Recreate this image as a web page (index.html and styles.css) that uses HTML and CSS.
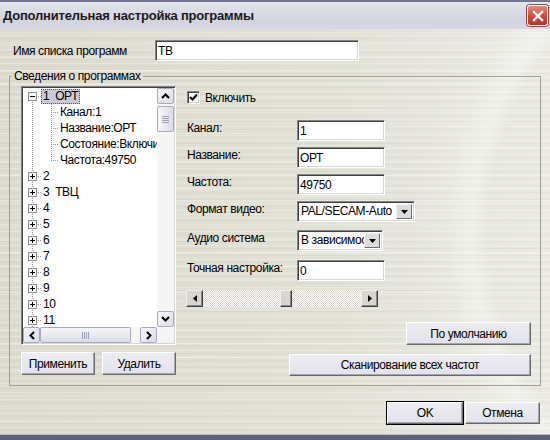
FILE: index.html
```html
<!DOCTYPE html>
<html lang="ru">
<head>
    <meta charset="UTF-8">
    <meta name="viewport" content="width=device-width, initial-scale=1.0">
    <title>Дополнительная настройка программы</title>
    <link rel="stylesheet" href="styles.css">
</head>
<body>

<div class="window">
    <div class="titlebar">
        <span class="title">Дополнительная настройка программы</span>
        <button class="close-btn" title="Закрыть">
            <svg width="12" height="12" viewBox="0 0 12 12"><path d="M2 2 L10 10 M10 2 L2 10" stroke="#fff" stroke-width="2.4" stroke-linecap="square"/></svg>
        </button>
    </div>

    <div class="name-row">
        <label class="name-label" for="listName">Имя списка программ</label>
        <input class="edit name-edit" id="listName" type="text" value="ТВ">
    </div>

    <fieldset class="group">
        <legend>Сведения о программах</legend>
        <div class="group-body">
            <div class="left-col">
                <div class="tree">
                    <ul class="tree-list">
                        <li class="node"><span class="tw root first"><span class="box minus"></span></span><span class="lbl selected">1&nbsp;&nbsp;ОРТ</span></li>
                        <li class="node"><span class="tw root-line"></span><span class="tw2 branch"></span><span class="lbl">Канал:1</span></li>
                        <li class="node"><span class="tw root-line"></span><span class="tw2 branch"></span><span class="lbl">Название:ОРТ</span></li>
                        <li class="node"><span class="tw root-line"></span><span class="tw2 branch"></span><span class="lbl">Состояние:Включить</span></li>
                        <li class="node"><span class="tw root-line"></span><span class="tw2 branch last"></span><span class="lbl">Частота:49750</span></li>
                        <li class="node"><span class="tw root"><span class="box plus"></span></span><span class="lbl">2</span></li>
                        <li class="node"><span class="tw root"><span class="box plus"></span></span><span class="lbl">3&nbsp;&nbsp;ТВЦ</span></li>
                        <li class="node"><span class="tw root"><span class="box plus"></span></span><span class="lbl">4</span></li>
                        <li class="node"><span class="tw root"><span class="box plus"></span></span><span class="lbl">5</span></li>
                        <li class="node"><span class="tw root"><span class="box plus"></span></span><span class="lbl">6</span></li>
                        <li class="node"><span class="tw root"><span class="box plus"></span></span><span class="lbl">7</span></li>
                        <li class="node"><span class="tw root"><span class="box plus"></span></span><span class="lbl">8</span></li>
                        <li class="node"><span class="tw root"><span class="box plus"></span></span><span class="lbl">9</span></li>
                        <li class="node"><span class="tw root"><span class="box plus"></span></span><span class="lbl">10</span></li>
                        <li class="node"><span class="tw root"><span class="box plus"></span></span><span class="lbl">11</span></li>
                        <li class="node"><span class="tw root"><span class="box plus"></span></span><span class="lbl">12</span></li>
                    </ul>
                    <div class="vscroll">
                        <span class="sb-btn"><svg width="9" height="6" viewBox="0 0 9 6"><path d="M1 5 L4.5 1.5 L8 5" fill="none" stroke="#000" stroke-width="2"/></svg></span>
                        <span class="sb-thumb v-thumb"></span>
                        <span class="sb-track"></span>
                        <span class="sb-btn"><svg width="9" height="6" viewBox="0 0 9 6"><path d="M1 1 L4.5 4.5 L8 1" fill="none" stroke="#000" stroke-width="2"/></svg></span>
                    </div>
                    <div class="hscroll">
                        <span class="sb-btn"><svg width="6" height="9" viewBox="0 0 6 9"><path d="M5 1 L1.5 4.5 L5 8" fill="none" stroke="#000" stroke-width="2"/></svg></span>
                        <span class="sb-thumb h-thumb"></span>
                        <span class="sb-track"></span>
                        <span class="sb-btn"><svg width="6" height="9" viewBox="0 0 6 9"><path d="M1 1 L4.5 4.5 L1 8" fill="none" stroke="#000" stroke-width="2"/></svg></span>
                    </div>
                    <div class="corner"></div>
                </div>
                <div class="tree-buttons">
                    <button class="btn">Применить</button>
                    <button class="btn">Удалить</button>
                </div>
            </div>

            <div class="right-col">
                <div class="check-row">
                    <span class="checkbox"><svg width="9" height="9" viewBox="0 0 9 9"><path d="M1 4 L3.5 6.5 L8 1.5" fill="none" stroke="#000" stroke-width="2"/></svg></span>
                    <span class="check-label">Включить</span>
                </div>

                <div class="field row-channel">
                    <span class="field-label">Канал:</span>
                    <input class="edit field-edit" type="text" value="1">
                </div>
                <div class="field row-name">
                    <span class="field-label">Название:</span>
                    <input class="edit field-edit" type="text" value="ОРТ">
                </div>
                <div class="field row-freq">
                    <span class="field-label">Частота:</span>
                    <input class="edit field-edit" type="text" value="49750">
                </div>
                <div class="field row-format">
                    <span class="field-label">Формат видео:</span>
                    <div class="combo format-combo">
                        <span class="combo-text">PAL/SECAM-Auto</span>
                        <span class="combo-btn"><svg width="7" height="4" viewBox="0 0 7 4"><path d="M0 0 H7 L3.5 4 Z" fill="#000"/></svg></span>
                    </div>
                </div>
                <div class="field row-audio">
                    <span class="field-label">Аудио система</span>
                    <div class="combo audio-combo">
                        <span class="combo-text">В зависимости от формата</span>
                        <span class="combo-btn"><svg width="7" height="4" viewBox="0 0 7 4"><path d="M0 0 H7 L3.5 4 Z" fill="#000"/></svg></span>
                    </div>
                </div>
                <div class="field row-fine">
                    <span class="field-label">Точная настройка:</span>
                    <input class="edit field-edit" type="text" value="0">
                </div>

                <div class="trackbar">
                    <span class="cl-btn"><svg width="4" height="7" viewBox="0 0 4 7"><path d="M4 0 V7 L0 3.5 Z" fill="#000"/></svg></span>
                    <span class="cl-track fine-left"></span>
                    <span class="cl-thumb"></span>
                    <span class="cl-track fine-right"></span>
                    <span class="cl-btn"><svg width="4" height="7" viewBox="0 0 4 7"><path d="M0 0 V7 L4 3.5 Z" fill="#000"/></svg></span>
                </div>

                <div class="action-row">
                    <button class="btn default-btn">По умолчанию</button>
                </div>
                <div class="action-row">
                    <button class="btn scan-btn">Сканирование всех частот</button>
                </div>
            </div>
        </div>
    </fieldset>

    <div class="dialog-buttons">
        <button class="btn ok-btn">OK</button>
        <button class="btn cancel-btn">Отмена</button>
    </div>

    <div class="frame-bottom"></div>
</div>

</body>
</html>
```

FILE: styles.css
```css
body {
    margin: 0;
    font-family: "Liberation Sans", Arial, sans-serif;
    font-size: 12px;
    letter-spacing: -0.4px;
    color: #000;
}
button, input {
    font-family: inherit;
    font-size: 12px;
    letter-spacing: inherit;
    color: #000;
}
.window {
    width: 550px;
    height: 440px;
    display: flex;
    flex-direction: column;
    overflow: hidden;
    background-color: #dedcd0;
    background-image:
        radial-gradient(circle at 790px 230px, transparent 300px, rgba(255, 255, 255, 0.35) 318px, rgba(255, 255, 255, 0.1) 345px, transparent 380px),
        repeating-linear-gradient(to bottom, rgba(255, 255, 255, 0.25) 0 1px, transparent 1px 3px, rgba(0, 0, 0, 0.03) 3px 4px, transparent 4px 7px),
        repeating-linear-gradient(to bottom, transparent 0 5px, rgba(255, 255, 255, 0.2) 5px 7px, transparent 7px 13px),
        linear-gradient(to right, #dddbcf 0%, #e2e1d6 60%, #ebeae2 100%);
}

/* caption */
.titlebar {
    height: 27px;
    flex: none;
    display: flex;
    align-items: center;
    padding-left: 3px;
    border-top: 2px solid #727690;
    background: linear-gradient(to bottom, #e4e4ec, #d3d3de 70%, #d8d8e2);
}
.title {
    font-weight: bold;
    font-size: 13px;
    letter-spacing: -0.2px;
    color: #1a1a1a;
}
.close-btn {
    margin-left: auto;
    margin-right: 2px;
    width: 21px;
    height: 21px;
    padding: 0;
    display: flex;
    align-items: center;
    justify-content: center;
    border: 1px solid #fff;
    border-radius: 3px;
    background: linear-gradient(to bottom, #e88a7e, #cc4a3c 55%, #b8372a);
    box-shadow: 0 0 0 1px #a04a40;
}

/* list name */
.name-row {
    display: flex;
    align-items: center;
    margin: 11px 0 0 13px;
    height: 21px;
}
.name-label {
    width: 142px;
}
.name-edit {
    width: 204px;
}

/* sunken edit boxes */
.edit {
    box-sizing: border-box;
    height: 21px;
    margin: 0;
    padding: 0 2px;
    background: #fff;
    border: 1px solid;
    border-color: #858585 #fff #fff #858585;
    box-shadow: inset 1px 1px 0 #404040, inset -1px -1px 0 #d6d6d6;
    outline: none;
}

/* group box */
.group {
    box-sizing: border-box;
    width: 532px;
    height: 317px;
    min-width: 0;
    margin: 8px 0 0 9px;
    padding: 3px 9px 0 2px;
    border: 1px solid #a09f98;
}
.group legend {
    padding: 0 2px;
    line-height: 14px;
}
.group-body {
    display: flex;
    gap: 11px;
    margin-left: 9px;
}
.left-col {
    width: 155px;
    flex: none;
}

/* tree view */
.tree {
    box-sizing: border-box;
    height: 259px;
    display: grid;
    grid-template-columns: 1fr 17px;
    grid-template-rows: 1fr 16px;
    background: #fff;
    border: 1px solid;
    border-color: #858585 #fff #fff #858585;
    box-shadow: inset 1px 1px 0 #404040, inset -1px -1px 0 #d6d6d6;
    padding: 1px;
}
.tree-list {
    list-style: none;
    margin: 0;
    padding: 0;
    overflow: hidden;
    min-width: 0;
}
.node {
    display: flex;
    align-items: center;
    height: 16px;
    white-space: nowrap;
}
.tw, .tw2 {
    flex: none;
    height: 16px;
    display: flex;
    align-items: center;
    background-repeat: no-repeat;
}
.tw {
    width: 18px;
}
.tw2 {
    width: 17px;
}
.root {
    background-image:
        repeating-linear-gradient(to bottom, #9a9a9a 0 1px, transparent 1px 2px),
        repeating-linear-gradient(to right, #9a9a9a 0 1px, transparent 1px 2px);
    background-size: 1px 16px, 9px 1px;
    background-position: 9px 0, 9px 8px;
}
.root.first {
    background-size: 1px 8px, 9px 1px;
    background-position: 9px 8px, 9px 8px;
}
.root-line {
    background-image: repeating-linear-gradient(to bottom, #9a9a9a 0 1px, transparent 1px 2px);
    background-size: 1px 16px;
    background-position: 9px 0;
}
.branch {
    background-image:
        repeating-linear-gradient(to bottom, #9a9a9a 0 1px, transparent 1px 2px),
        repeating-linear-gradient(to right, #9a9a9a 0 1px, transparent 1px 2px);
    background-size: 1px 16px, 7px 1px;
    background-position: 10px 0, 10px 8px;
}
.branch.last {
    background-size: 1px 9px, 7px 1px;
}
.box {
    box-sizing: border-box;
    width: 9px;
    height: 9px;
    margin-left: 5px;
    border: 1px solid #919191;
    background: #fff;
}
.box.minus {
    background: linear-gradient(#000, #000) center / 5px 1px no-repeat, #fff;
}
.box.plus {
    background:
        linear-gradient(#000, #000) center / 5px 1px no-repeat,
        linear-gradient(#000, #000) center / 1px 5px no-repeat,
        #fff;
}
.lbl {
    padding: 0 2px;
    line-height: 15px;
}
.lbl.selected {
    background: #c9cad8;
    outline: 1px dotted #555;
    outline-offset: -1px;
}

/* xp style scroll bars */
.vscroll, .hscroll {
    display: flex;
    background: #f5f5f3;
}
.vscroll {
    flex-direction: column;
}
.sb-btn, .sb-thumb {
    box-sizing: border-box;
    display: flex;
    align-items: center;
    justify-content: center;
    border: 1px solid #a9abbd;
    border-radius: 2px;
    background: linear-gradient(135deg, #f6f6fa, #dcdce8);
}
.vscroll .sb-btn {
    height: 16px;
}
.hscroll .sb-btn {
    width: 17px;
}
.sb-track {
    flex: 1;
}
.v-thumb {
    height: 26px;
    margin-top: 2px;
    background:
        repeating-linear-gradient(to bottom, #9fa1b4 0 1px, transparent 1px 2px) center / 7px 7px no-repeat,
        linear-gradient(to right, #f6f6fa, #dcdce8);
}
.h-thumb {
    width: 91px;
    background:
        repeating-linear-gradient(to right, #9fa1b4 0 1px, transparent 1px 2px) center / 7px 7px no-repeat,
        linear-gradient(to bottom, #f6f6fa, #dcdce8);
}
.corner {
    background: #f5f5f3;
}

.tree-buttons {
    display: flex;
    gap: 7px;
    margin-top: 7px;
}
.tree-buttons .btn {
    width: 74px;
    height: 23px;
}

/* buttons */
.btn {
    box-sizing: border-box;
    padding: 0;
    background: linear-gradient(to bottom, #ececf2, #e2e2ea);
    border: 1px solid;
    border-color: #fff #6a6a6a #6a6a6a #fff;
    box-shadow: inset -1px -1px 0 #a5a5ae;
}

/* right side */
.right-col {
    flex: 1;
    display: flex;
    flex-direction: column;
}
.check-row {
    display: flex;
    align-items: center;
    height: 13px;
    margin-top: 5px;
}
.checkbox {
    box-sizing: border-box;
    width: 13px;
    height: 13px;
    display: flex;
    align-items: center;
    justify-content: center;
    background: #fff;
    border: 1px solid;
    border-color: #858585 #fff #fff #858585;
    box-shadow: inset 1px 1px 0 #404040, inset -1px -1px 0 #d6d6d6;
}
.check-label {
    margin-left: 5px;
}
.field {
    display: flex;
    align-items: flex-start;
    height: 21px;
}
.field-label {
    width: 110px;
    flex: none;
    line-height: 14px;
    padding-top: 1px;
}
.field-edit {
    width: 88px;
}
.row-channel { margin-top: 16px; }
.row-name { margin-top: 6px; }
.row-freq { margin-top: 6px; }
.row-format { margin-top: 6px; }
.row-audio { margin-top: 8px; }
.row-fine { margin-top: 9px; }

.combo {
    box-sizing: border-box;
    height: 21px;
    display: flex;
    align-items: stretch;
    background: #fff;
    border: 1px solid;
    border-color: #858585 #fff #fff #858585;
    box-shadow: inset 1px 1px 0 #404040, inset -1px -1px 0 #d6d6d6;
    padding: 2px;
    overflow: hidden;
}
.format-combo {
    width: 118px;
}
.audio-combo {
    width: 86px;
}
.combo-text {
    flex: 1;
    min-width: 0;
    overflow: hidden;
    white-space: nowrap;
    line-height: 15px;
    padding-left: 1px;
}
.combo-btn {
    box-sizing: border-box;
    width: 16px;
    flex: none;
    display: flex;
    align-items: center;
    justify-content: center;
    background: #dcdcdc;
    border: 1px solid;
    border-color: #f4f4f4 #6e6e6e #6e6e6e #f4f4f4;
}

/* classic scroll bar under the fine tuning field */
.trackbar {
    display: flex;
    height: 17px;
    width: 192px;
    margin: 9px 0 0 -1px;
}
.cl-btn, .cl-thumb {
    box-sizing: border-box;
    flex: none;
    width: 17px;
    display: flex;
    align-items: center;
    justify-content: center;
    background: #d8d6cc;
    border: 1px solid;
    border-color: #f0f0f0 #404040 #404040 #f0f0f0;
    box-shadow: inset -1px -1px 0 #8a8a8a;
}
.cl-thumb {
    width: 12px;
}
.cl-track {
    background: repeating-conic-gradient(#fff 0 25%, #d8d6cc 0 50%) 0 0 / 2px 2px;
}
.fine-left {
    width: 77px;
}
.fine-right {
    flex: 1;
}

.action-row {
    display: flex;
    justify-content: flex-end;
}
.default-btn {
    width: 125px;
    height: 23px;
    margin-top: 15px;
}
.scan-btn {
    width: 242px;
    height: 22px;
    margin-top: 9px;
}

/* dialog buttons */
.dialog-buttons {
    display: flex;
    justify-content: flex-end;
    gap: 2px;
    margin: 16px 10px 0 0;
}
.dialog-buttons .btn {
    height: 22px;
}
.ok-btn {
    width: 76px;
    outline: 1px solid #000;
    outline-offset: 0;
}
.cancel-btn {
    width: 75px;
}

.frame-bottom {
    margin-top: auto;
    height: 6px;
    background: linear-gradient(to bottom, #b8bccb 0 1px, #5c6278 1px);
}
```
